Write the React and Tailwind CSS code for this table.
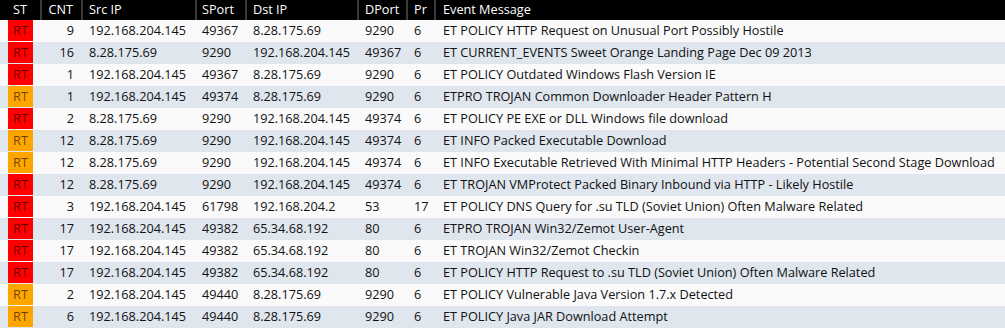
import React from "react";

const rows = [
  ["red", 9, "192.168.204.145", "49367", "8.28.175.69", "9290", "6", "ET POLICY HTTP Request on Unusual Port Possibly Hostile"],
  ["red", 16, "8.28.175.69", "9290", "192.168.204.145", "49367", "6", "ET CURRENT_EVENTS Sweet Orange Landing Page Dec 09 2013"],
  ["red", 1, "192.168.204.145", "49367", "8.28.175.69", "9290", "6", "ET POLICY Outdated Windows Flash Version IE"],
  ["orange", 1, "192.168.204.145", "49374", "8.28.175.69", "9290", "6", "ETPRO TROJAN Common Downloader Header Pattern H"],
  ["red", 2, "8.28.175.69", "9290", "192.168.204.145", "49374", "6", "ET POLICY PE EXE or DLL Windows file download"],
  ["orange", 12, "8.28.175.69", "9290", "192.168.204.145", "49374", "6", "ET INFO Packed Executable Download"],
  ["orange", 12, "8.28.175.69", "9290", "192.168.204.145", "49374", "6", "ET INFO Executable Retrieved With Minimal HTTP Headers - Potential Second Stage Download"],
  ["red", 12, "8.28.175.69", "9290", "192.168.204.145", "49374", "6", "ET TROJAN VMProtect Packed Binary Inbound via HTTP - Likely Hostile"],
  ["red", 3, "192.168.204.145", "61798", "192.168.204.2", "53", "17", "ET POLICY DNS Query for .su TLD (Soviet Union) Often Malware Related"],
  ["red", 17, "192.168.204.145", "49382", "65.34.68.192", "80", "6", "ETPRO TROJAN Win32/Zemot User-Agent"],
  ["red", 17, "192.168.204.145", "49382", "65.34.68.192", "80", "6", "ET TROJAN Win32/Zemot Checkin"],
  ["red", 17, "192.168.204.145", "49382", "65.34.68.192", "80", "6", "ET POLICY HTTP Request to .su TLD (Soviet Union) Often Malware Related"],
  ["orange", 2, "192.168.204.145", "49440", "8.28.175.69", "9290", "6", "ET POLICY Vulnerable Java Version 1.7.x Detected"],
  ["orange", 6, "192.168.204.145", "49440", "8.28.175.69", "9290", "6", "ET POLICY Java JAR Download Attempt"],
];

export default function App() {
  return (
    <div className="w-[1005px] h-[328px] overflow-hidden bg-white font-['Open_Sans',sans-serif] text-[12.7px] text-[#111]">
      <table className="w-full table-fixed border-collapse">
        <colgroup>
          <col className="w-[41px]" />
          <col className="w-[41px]" />
          <col className="w-[114px]" />
          <col className="w-[50px]" />
          <col className="w-[112px]" />
          <col className="w-[49px]" />
          <col className="w-[28px]" />
          <col />
        </colgroup>
        <thead>
          <tr className="h-[20px] bg-black text-white text-left">
            <th className="font-normal text-center p-0">ST</th>
            <th className="font-normal text-right pr-[8px] border-l-2 border-[#3a3a3a]">CNT</th>
            <th className="font-normal pl-[6px] border-l-2 border-[#3a3a3a]">Src IP</th>
            <th className="font-normal pl-[5px] border-l-2 border-[#3a3a3a]">SPort</th>
            <th className="font-normal pl-[6px] border-l-2 border-[#3a3a3a]">Dst IP</th>
            <th className="font-normal pl-[6px] border-l-2 border-[#3a3a3a]">DPort</th>
            <th className="font-normal pl-[6px] border-l-2 border-[#3a3a3a]">Pr</th>
            <th className="font-normal pl-[7px] border-l-2 border-[#3a3a3a]">Event Message</th>
          </tr>
        </thead>
        <tbody>
          {rows.map((r, i) => (
            <tr key={i} className={`h-[22px] ${i % 2 === 0 ? "bg-[#fafafa]" : "bg-[#dfe6ee]"}`}>
              <td className="p-0 pb-px">
                <div
                  className={`mx-auto w-[25px] h-[21px] flex items-center justify-center text-black/60 ${
                    r[0] === "red" ? "bg-[#ff0000]" : "bg-[#ffa500]"
                  }`}
                >
                  RT
                </div>
              </td>
              <td className="text-right pr-[8px] whitespace-nowrap">{r[1]}</td>
              <td className="pl-[7px] whitespace-nowrap">{r[2]}</td>
              <td className="pl-[6px] whitespace-nowrap">{r[3]}</td>
              <td className="pl-[7px] whitespace-nowrap">{r[4]}</td>
              <td className="pl-[7px] whitespace-nowrap">{r[5]}</td>
              <td className="pl-[7px] whitespace-nowrap">{r[6]}</td>
              <td className="pl-[8px] whitespace-nowrap overflow-hidden">{r[7]}</td>
            </tr>
          ))}
        </tbody>
      </table>
    </div>
  );
}
